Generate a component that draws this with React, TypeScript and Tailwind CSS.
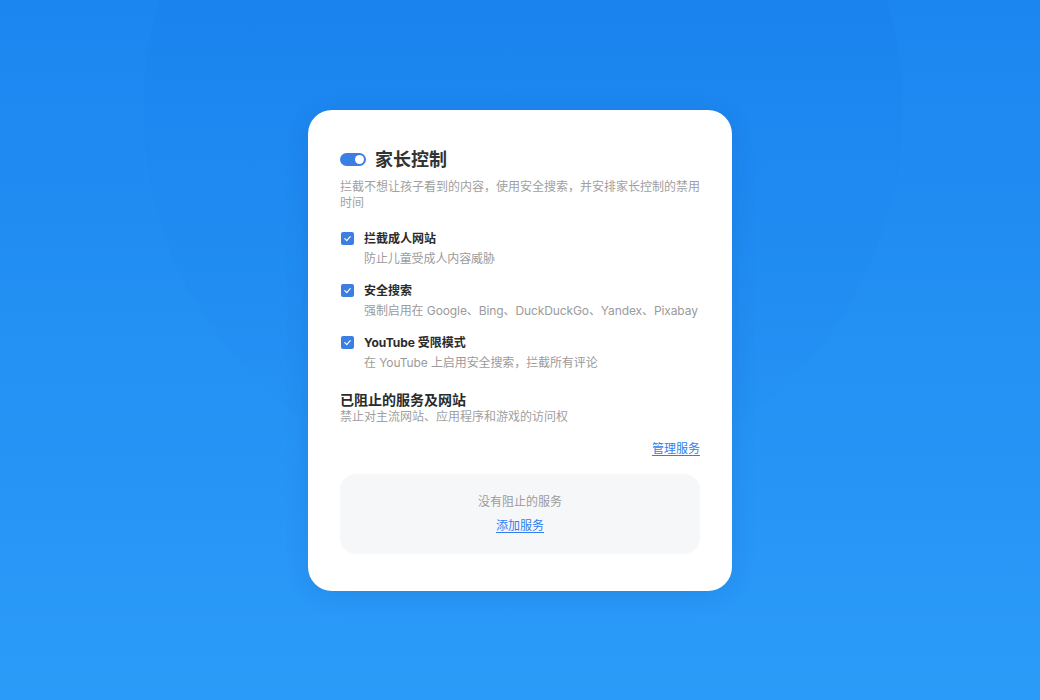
import React from "react";

function Check() {
  return (
    <span className="flex h-[13px] w-[13px] shrink-0 items-center justify-center rounded-[2px] bg-[#3b7fe3]">
      <svg width="9" height="9" viewBox="0 0 10 10" fill="none">
        <path d="M2 5.2 L4.2 7.3 L8 3" stroke="white" strokeWidth="1.3" strokeLinecap="round" strokeLinejoin="round" />
      </svg>
    </span>
  );
}

function Item({ title, sub }: { title: string; sub: string }) {
  return (
    <div className="flex flex-col">
      <div className="flex h-[18px] items-center gap-[10px] pl-[1px]">
        <Check />
        <span className="text-[12px] font-bold leading-[18px] text-[#2b2b2b]">{title}</span>
      </div>
      <div className="mt-[3px] whitespace-nowrap pl-[24px] text-[12px] leading-[16px] tracking-[-0.1px] text-[#9b9b9b]">{sub}</div>
    </div>
  );
}

export default function App() {
  return (
    <div
      className="relative flex h-[700px] w-full items-center justify-center overflow-hidden bg-gradient-to-b from-[#1c86f0] to-[#2b9bf8]"
      style={{ fontFamily: '"Inter", "Noto Sans CJK SC", sans-serif' }}
    >
      <div className="pointer-events-none absolute left-[143px] top-[-270px] h-[760px] w-[760px] rounded-full bg-gradient-to-b from-[#1478e6]/60 via-[#1a84ee]/30 to-transparent" />
      <div className="relative flex w-[424px] flex-col rounded-[24px] bg-white px-[32px] pb-[37px] pt-[38px] shadow-[0_4px_24px_rgba(0,40,120,0.12)]">
        <div className="flex h-[24px] items-center gap-[9px]">
          <span className="relative h-[13px] w-[26px] rounded-full bg-[#3b7fe3]">
            <span className="absolute right-[2px] top-[2px] h-[9px] w-[9px] rounded-full bg-white" />
          </span>
          <span className="text-[18px] font-bold leading-[24px] text-[#333333]">家长控制</span>
        </div>
        <p className="mt-[7px] text-[12px] leading-[16px] text-[#a0a0a0]">
          拦截不想让孩子看到的内容，使用安全搜索，并安排家长控制的禁用时间
        </p>
        <div className="mt-[19px] flex flex-col gap-[15px]">
          <Item title="拦截成人网站" sub="防止儿童受成人内容威胁" />
          <Item title="安全搜索" sub="强制启用在 Google、Bing、DuckDuckGo、Yandex、Pixabay" />
          <Item title="YouTube 受限模式" sub="在 YouTube 上启用安全搜索，拦截所有评论" />
        </div>
        <div className="mt-[20px] text-[14px] font-bold leading-[18px] text-[#2b2b2b]">已阻止的服务及网站</div>
        <div className="text-[12px] leading-[16px] text-[#a0a0a0]">禁止对主流网站、应用程序和游戏的访问权</div>
        <div className="mt-[16px] flex justify-end">
          <a className="text-[12px] leading-[16px] text-[#2f7ef0] underline underline-offset-2">管理服务</a>
        </div>
        <div className="mt-[17px] flex h-[80px] flex-col items-center justify-center gap-[8px] rounded-[16px] bg-[#f6f7f9]">
          <span className="text-[12px] leading-[16px] text-[#9b9b9b]">没有阻止的服务</span>
          <a className="text-[12px] leading-[16px] text-[#2f7ef0] underline underline-offset-2">添加服务</a>
        </div>
      </div>
    </div>
  );
}
